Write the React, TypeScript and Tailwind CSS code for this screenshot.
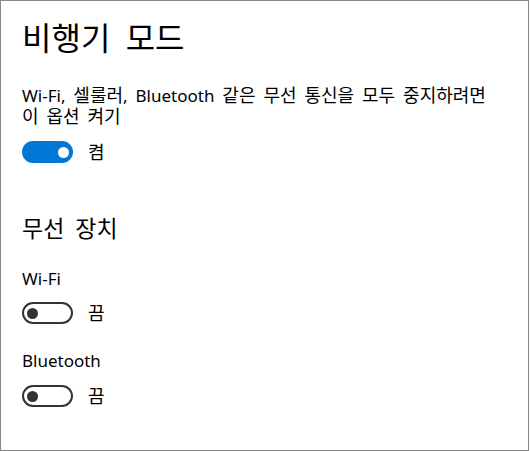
import React from "react";

function K({ text }: { text: string }) {
  const parts = text.split(/([\uAC00-\uD7A3]+)/);
  return (
    <>
      {parts.map((p, i) =>
        /[\uAC00-\uD7A3]/.test(p) ? (
          <span key={i} className="text-[18px] leading-[21px]">
            {p}
          </span>
        ) : (
          <React.Fragment key={i}>{p}</React.Fragment>
        )
      )}
    </>
  );
}

function Toggle({ on }: { on: boolean }) {
  if (on) {
    return (
      <div className="w-[51px] h-[22px] rounded-full bg-[#0078d7] flex items-center justify-end pr-[4px] shrink-0">
        <div className="w-[11px] h-[11px] rounded-full bg-white" />
      </div>
    );
  }
  return (
    <div className="w-[51px] h-[22px] rounded-full border-2 border-[#333333] bg-white flex items-center pl-[3px] shrink-0">
      <div className="w-[11px] h-[11px] rounded-full bg-[#333333]" />
    </div>
  );
}

export default function App() {
  return (
    <div
      className="w-[529px] h-[451px] border border-[#888888] bg-white text-black overflow-hidden"
      style={{ fontFamily: '"Noto Sans", "Noto Sans CJK KR", sans-serif' }}
    >
      <div className="pl-[21px] pt-[15px] flex flex-col">
        <div className="text-[32px] leading-[44px] [word-spacing:7px]">비행기 모드</div>
        <div className="mt-[25px] text-[17px] leading-[21px] [word-spacing:3.5px]">
          <K text="Wi-Fi, 셀룰러, Bluetooth 같은 무선 통신을 모두 중지하려면" />
          <br />
          <K text="이 옵션 켜기" />
        </div>
        <div className="mt-[14px] flex items-center gap-[15px]">
          <Toggle on />
          <span className="text-[18px] leading-[22px]">켬</span>
        </div>
        <div className="mt-[50px] text-[23px] leading-[30px] [word-spacing:5px]">무선 장치</div>
        <div className="mt-[25px] text-[17px] leading-[21px]">Wi-Fi</div>
        <div className="mt-[13px] flex items-center gap-[15px]">
          <Toggle on={false} />
          <span className="text-[18px] leading-[22px]">끔</span>
        </div>
        <div className="mt-[26px] text-[17px] leading-[21px]">Bluetooth</div>
        <div className="mt-[14px] flex items-center gap-[15px]">
          <Toggle on={false} />
          <span className="text-[18px] leading-[22px]">끔</span>
        </div>
      </div>
    </div>
  );
}
